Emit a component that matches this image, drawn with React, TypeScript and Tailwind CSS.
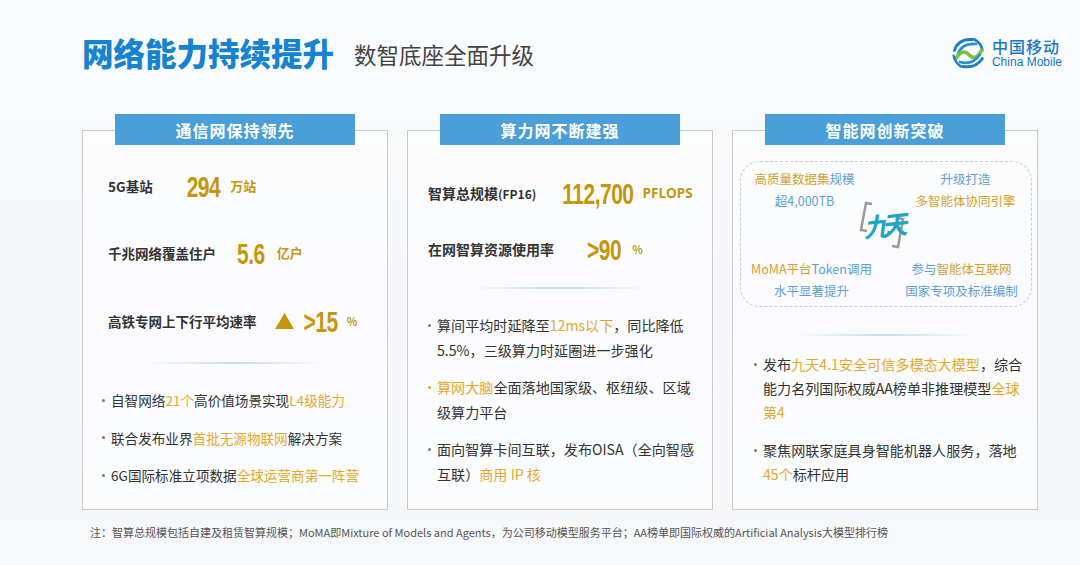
import React from "react";

const hl = "text-[#e2a92c]";

function Divider() {
  return <div className="mx-auto w-[178px] h-[2px] bg-gradient-to-r from-transparent via-[#c4dcee] to-transparent" />;
}

function Tab({ title }: { title: string }) {
  return (
    <div className="-mt-[17px] mx-auto w-[240px] h-[31px] bg-[#4b9fd8] flex items-center justify-center text-white text-[16px] font-bold tracking-[1px]">
      {title}
    </div>
  );
}

function Num({ children, className = "" }: { children: React.ReactNode; className?: string }) {
  return (
    <span
      className={
        "inline-block scale-y-[1.4] font-['Liberation_Sans',sans-serif] font-bold tracking-[-0.5px] text-[#c4960c] leading-none " +
        className
      }
    >
      {children}
    </span>
  );
}

function Bullet({ children, dot = "bg-[#777]", lh = "h-[24px]" }: { children: React.ReactNode; dot?: string; lh?: string }) {
  return (
    <div className="flex">
      <div className={"w-[9px] shrink-0 flex items-center " + lh}>
        <span className={"w-[3px] h-[3px] rounded-full " + dot} />
      </div>
      <p className="whitespace-nowrap">{children}</p>
    </div>
  );
}

function Logo() {
  return (
    <div className="flex items-center gap-[6px]">
      <svg width="36" height="36" viewBox="0 0 40 40" fill="none" strokeLinecap="round">
        <path d="M5 17 Q9 4 25 5" stroke="#1c7fc8" strokeWidth="3.2" />
        <path d="M9 21 Q13 9 29 10" stroke="#2b8fd4" strokeWidth="3" />
        <path d="M27 5 Q35 9 36 17" stroke="#1c7fc8" strokeWidth="3" />
        <path d="M6 27 Q14 14 21 22 T35 17" stroke="#7cc242" strokeWidth="4" />
        <path d="M11 30 Q25 34 33 22" stroke="#2b8fd4" strokeWidth="3" />
        <path d="M14 35 Q29 37 36 26" stroke="#1c7fc8" strokeWidth="3.2" />
        <path d="M4 23 Q5 30 12 35" stroke="#1c7fc8" strokeWidth="2.6" />
      </svg>
      <div className="flex flex-col gap-[1px] text-[#1a78c2]">
        <span className="text-[16px] leading-[18px] font-medium tracking-[1px]">中国移动</span>
        <span className="text-[12px] leading-[13px] font-['Liberation_Sans',sans-serif]">China Mobile</span>
      </div>
    </div>
  );
}

function JiuTian() {
  return (
    <div className="absolute left-[118px] top-[36px] w-[50px] h-[54px] flex items-center justify-center">
      <svg className="absolute inset-0" width="50" height="54" viewBox="0 0 50 54" fill="none" stroke="#9a9a9a" strokeWidth="2.5">
        <path d="M13 6 L7 5 L2 32 L8 33" />
        <path d="M38 20 L44 21 L39 49 L33 48" />
      </svg>
      <span className="relative text-[#1fa5c4] text-[26px] font-bold italic tracking-[-8px] -rotate-6 -ml-[6px]">九天</span>
    </div>
  );
}

export default function App() {
  return (
    <div className="w-[1080px] h-[565px] overflow-hidden bg-gradient-to-b from-[#fbfcfd] via-[#f4f6f9] to-[#f7f8fa] font-['Noto_Sans_CJK_SC','Noto_Sans',sans-serif] text-[#333]">
      <header className="h-[106px] flex items-center pl-[82px] pr-[18px]">
        <h1 className="text-[31.5px] font-black text-[#1683d1] leading-none">网络能力持续提升</h1>
        <span className="ml-[20px] text-[22.5px] text-[#444] leading-none mt-[2px]">数智底座全面升级</span>
        <div className="ml-auto">
          <Logo />
        </div>
      </header>

      <div className="mt-[8px] ml-[82px] w-[956px] flex gap-[19px]">
        {/* card 1 */}
        <div className="w-[306px] h-[380px] mt-[16px] border border-[#c8c8c8] bg-white/60 flex flex-col">
          <Tab title="通信网保持领先" />
          <div className="pl-[25px] text-[13.5px] font-bold whitespace-nowrap">
            <div className="mt-[26px] h-[30px] flex items-center">
              <span>5G基站</span>
              <Num className="ml-[34px] text-[21px]">294</Num>
              <span className="ml-[10px] text-[#c4960c] text-[13px]">万站</span>
            </div>
            <div className="mt-[37px] h-[30px] flex items-center">
              <span>千兆网络覆盖住户</span>
              <Num className="ml-[21px] text-[21px]">5.6</Num>
              <span className="ml-[12px] text-[#c4960c] text-[13px]">亿户</span>
            </div>
            <div className="mt-[38px] h-[30px] flex items-center">
              <span>高铁专网上下行平均速率</span>
              <svg className="ml-[18px]" width="19" height="16" viewBox="0 0 19 16">
                <polygon points="9.5,0 19,16 0,16" fill="#c4960c" />
              </svg>
              <Num className="ml-[10px] text-[21px]">&gt;15</Num>
              <span className="ml-[9px] text-[#c4960c] text-[11px]">%</span>
            </div>
          </div>
          <div className="mt-[26px]">
            <Divider />
          </div>
          <div className="mt-[24px] pl-[19px] text-[13.6px] leading-[24px] flex flex-col gap-[13.5px]">
            <Bullet>
              自智网络<span className={hl}>21个</span>高价值场景实现<span className={hl}>L4级能力</span>
            </Bullet>
            <Bullet>
              联合发布业界<span className={hl}>首批无源物联网</span>解决方案
            </Bullet>
            <Bullet>
              6G国际标准立项数据<span className={hl}>全球运营商第一阵营</span>
            </Bullet>
          </div>
        </div>

        {/* card 2 */}
        <div className="w-[306px] h-[380px] mt-[16px] border border-[#c8c8c8] bg-white/60 flex flex-col">
          <Tab title="算力网不断建强" />
          <div className="pl-[20px] text-[14px] font-bold whitespace-nowrap">
            <div className="mt-[33px] h-[30px] flex items-center">
              <span>
                智算总规模<span className="text-[12px]">(FP16)</span>
              </span>
              <Num className="ml-[26px] text-[21px]">112,700</Num>
              <span className="ml-[9px] text-[#c4960c] text-[13.5px] font-['Open_Sans',sans-serif]">PFLOPS</span>
            </div>
            <div className="mt-[26px] h-[30px] flex items-center">
              <span>在网智算资源使用率</span>
              <Num className="ml-[33px] text-[21px]">&gt;90</Num>
              <span className="ml-[11px] text-[#c4960c] text-[11px]">%</span>
            </div>
          </div>
          <div className="mt-[23px]">
            <Divider />
          </div>
          <div className="mt-[24px] pl-[20px] text-[14.1px] leading-[25px] flex flex-col gap-[12px]">
            <Bullet lh="h-[25px]">
              算间平均时延降至<span className={hl}>12ms以下</span>，同比降低
              <br />
              5.5%，三级算力时延圈进一步强化
            </Bullet>
            <Bullet lh="h-[25px]" dot="bg-[#e2a92c]">
              <span className={hl}>算网大脑</span>全面落地国家级、枢纽级、区域
              <br />
              级算力平台
            </Bullet>
            <Bullet lh="h-[25px]">
              面向智算卡间互联，发布OISA（全向智感
              <br />
              互联）<span className={hl}>商用 IP 核</span>
            </Bullet>
          </div>
        </div>

        {/* card 3 */}
        <div className="w-[306px] h-[380px] mt-[16px] border border-[#c8c8c8] bg-white/60 flex flex-col">
          <Tab title="智能网创新突破" />
          <div className="relative mt-[16px] ml-[7px] mr-[5px] h-[146px] rounded-[20px] border border-dashed border-[#c3ccd6] flex flex-col justify-between pt-[6px] pb-[4px] text-[12.5px] leading-[22px] text-[#5c9fd5]">
            <div className="grid grid-cols-2">
              <div className="text-center -ml-[18px]">
                <p><span className="text-[#d4a233]">高质量数据集</span>规模</p>
                <p>超4,000TB</p>
              </div>
              <div className="text-center ml-[14px]">
                <p>升级打造</p>
                <p className="text-[#d4a233]">多智能体协同引擎</p>
              </div>
            </div>
            <div className="grid grid-cols-2">
              <div className="text-center -ml-[4px]">
                <p><span className="text-[#d4a233]">MoMA平台</span>Token调用</p>
                <p>水平显著提升</p>
              </div>
              <div className="text-center ml-[6px]">
                <p>参与<span className="text-[#d4a233]">智能体互联网</span></p>
                <p>国家专项及标准编制</p>
              </div>
            </div>
            <JiuTian />
          </div>
          <div className="mt-[27px]">
            <Divider />
          </div>
          <div className="mt-[16px] pl-[21px] text-[14.1px] leading-[24px] flex flex-col gap-[14px]">
            <Bullet>
              发布<span className={hl}>九天4.1安全可信多模态大模型</span>，综合
              <br />
              能力名列国际权威AA榜单非推理模型<span className={hl}>全球</span>
              <br />
              <span className={hl}>第4</span>
            </Bullet>
            <Bullet>
              聚焦网联家庭具身智能机器人服务，落地
              <br />
              <span className={hl}>45个</span>标杆应用
            </Bullet>
          </div>
        </div>
      </div>

      <p className="mt-[14px] ml-[90px] text-[11px] text-[#555] whitespace-nowrap">
        注：智算总规模包括自建及租赁智算规模；MoMA即Mixture of Models and Agents，为公司移动模型服务平台；AA榜单即国际权威的Artificial Analysis大模型排行榜
      </p>
    </div>
  );
}
